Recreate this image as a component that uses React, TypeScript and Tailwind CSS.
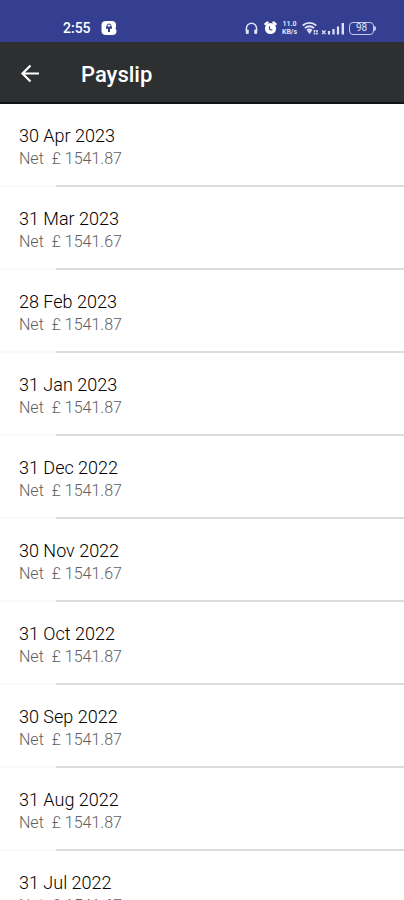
const payslips = [
  { date: "30 Apr 2023", net: "1541.87" },
  { date: "31 Mar 2023", net: "1541.67" },
  { date: "28 Feb 2023", net: "1541.87" },
  { date: "31 Jan 2023", net: "1541.87" },
  { date: "31 Dec 2022", net: "1541.87" },
  { date: "30 Nov 2022", net: "1541.67" },
  { date: "31 Oct 2022", net: "1541.87" },
  { date: "30 Sep 2022", net: "1541.87" },
  { date: "31 Aug 2022", net: "1541.87" },
  { date: "31 Jul 2022", net: "1541.67" },
];

const LockIcon = () => (
  <svg width="16" height="14" viewBox="0 0 16 14" fill="none" aria-hidden="true">
    <path
      d="M5 0h6c2.500 0 4 1.500 4 4v2c0 .8-.3 1.300-.8 1.600.8.400 1.300 1.200 1.300 2.400 0 2.500-1.500 4-4 4H5c-2.800 0-4.500-1.500-4.500-4V4C.5 1.500 2.200 0 5 0Z"
      fill="#fff"
    />
    <path d="M6 6V5a2 2 0 0 1 4 0v1" stroke="#343f92" strokeWidth="1" />
    <path d="M5 5.500h6v2.300H9V11H7V7.800H5Z" fill="#343f92" />
  </svg>
);

const HeadphonesIcon = () => (
  <svg width="13" height="13" viewBox="0 0 13 13" fill="none" aria-hidden="true">
    <path d="M1.400 9V6.300a5.100 5.100 0 0 1 10.200 0V9" stroke="#dfe2f7" strokeWidth="1.500" />
    <rect x="0.800" y="7.500" width="3" height="4.500" rx="1" fill="#dfe2f7" />
    <rect x="9.200" y="7.500" width="3" height="4.500" rx="1" fill="#dfe2f7" />
  </svg>
);

const AlarmIcon = () => (
  <svg width="13" height="14" viewBox="0 0 13 14" fill="none" aria-hidden="true">
    <path d="M1.500 3 3.500 1.500M11.500 3 9.500 1.500" stroke="#fff" strokeWidth="2.400" strokeLinecap="round" />
    <circle cx="6.500" cy="7.500" r="5.600" fill="#fff" />
    <path d="M5.500 5.200v3l2.800 1" stroke="#343f92" strokeWidth="1.100" />
  </svg>
);

const WifiIcon = () => (
  <svg width="17" height="14" viewBox="0 0 17 14" fill="none" aria-hidden="true">
    <path
      d="M.8 4.500a9.800 9.800 0 0 1 13.400 0M3 7.100a6.500 6.500 0 0 1 9 0M5.100 9.600a3.500 3.500 0 0 1 4.800 0"
      stroke="#dfe2f7"
      strokeWidth="1.900"
    />
    <path d="M5.500 10.300a2.800 2.800 0 0 1 4 0L7.500 13Z" fill="#dfe2f7" />
    <path d="M12.500 9v4.500M15 9v4.500" stroke="#dfe2f7" strokeWidth="1.600" strokeDasharray="1.900 .7" />
  </svg>
);

const SignalIcon = () => (
  <svg width="24" height="13" viewBox="0 0 24 13" fill="none" aria-hidden="true">
    <path d="m1 8.500 3.500 3.500M4.500 8.500 1 12" stroke="#dfe2f7" strokeWidth="1.200" />
    <path d="M8 9v3.500M12.500 7v5.500M17 4.500v8" stroke="#dfe2f7" strokeWidth="2.200" />
    <path d="M21.800 1v11.500" stroke="#dfe2f7" strokeWidth="2.400" />
  </svg>
);

function StatusBar() {
  return (
    <div className="flex h-[42px] shrink-0 items-end justify-between bg-[#343f92] pr-7 pb-[7px] pl-[63px] text-white">
      <div className="flex h-3.5 items-center gap-2.5">
        <span className="text-[14px] leading-[14px] font-medium">2:55</span>
        <LockIcon />
      </div>
      <div className="flex h-3.5 items-center">
        <HeadphonesIcon />
        <div className="ml-1.5 flex">
          <AlarmIcon />
        </div>
        <div className="ml-1 flex w-[17px] flex-col text-center text-[7px] leading-[8px] font-bold text-[#dfe2f7]">
          <span>11.0</span>
          <span>KB/s</span>
        </div>
        <div className="ml-1 flex">
          <WifiIcon />
        </div>
        <div className="ml-0.5 flex">
          <SignalIcon />
        </div>
        <div className="ml-1 flex items-center">
          <span className="flex h-[13px] w-[25px] items-center justify-center rounded-[4px] border border-[#c3c9ee] text-[10px] leading-[10px] text-[#dfe2f7]">
            98
          </span>
          <span className="h-[5px] w-0.5 rounded-r bg-[#c3c9ee]" />
        </div>
      </div>
    </div>
  );
}

function AppBar() {
  return (
    <header className="flex h-[62px] shrink-0 items-center border-b-2 border-[#111315] bg-[#2d2f31] px-5 pt-1 text-white">
      <button type="button" aria-label="Back" className="flex">
        <svg width="20" height="20" viewBox="0 0 20 20" fill="none" aria-hidden="true">
          <path d="M19 9.500H2.500M10.500 1.500l-8 8 8 8" stroke="currentColor" strokeWidth="2.200" />
        </svg>
      </button>
      <h1 className="ml-[41px] pt-0.5 text-[22px] leading-7 font-medium">Payslip</h1>
    </header>
  );
}

export default function App() {
  return (
    <div className="flex h-screen flex-col overflow-hidden bg-white font-['Roboto','Liberation_Sans',sans-serif]">
      <StatusBar />
      <AppBar />
      <ul className="min-h-0 flex-1 overflow-y-auto [scrollbar-width:none]">
        {payslips.map((slip) => (
          <li key={slip.date}>
            <button type="button" className="block w-full px-[19px] pt-5 pb-[15px] text-left">
              <span className="block text-[18px] leading-6 font-light text-black">{slip.date}</span>
              <span className="flex gap-2 text-[16px] leading-[22px] font-light text-[#606060]">
                <span>Net</span>
                <span>£ {slip.net}</span>
              </span>
            </button>
            <div className="flex h-0.5">
              <div className="w-14 bg-[#f9f9f9]" />
              <div className="flex-1 bg-[#dcdcdc]" />
            </div>
          </li>
        ))}
      </ul>
    </div>
  );
}
